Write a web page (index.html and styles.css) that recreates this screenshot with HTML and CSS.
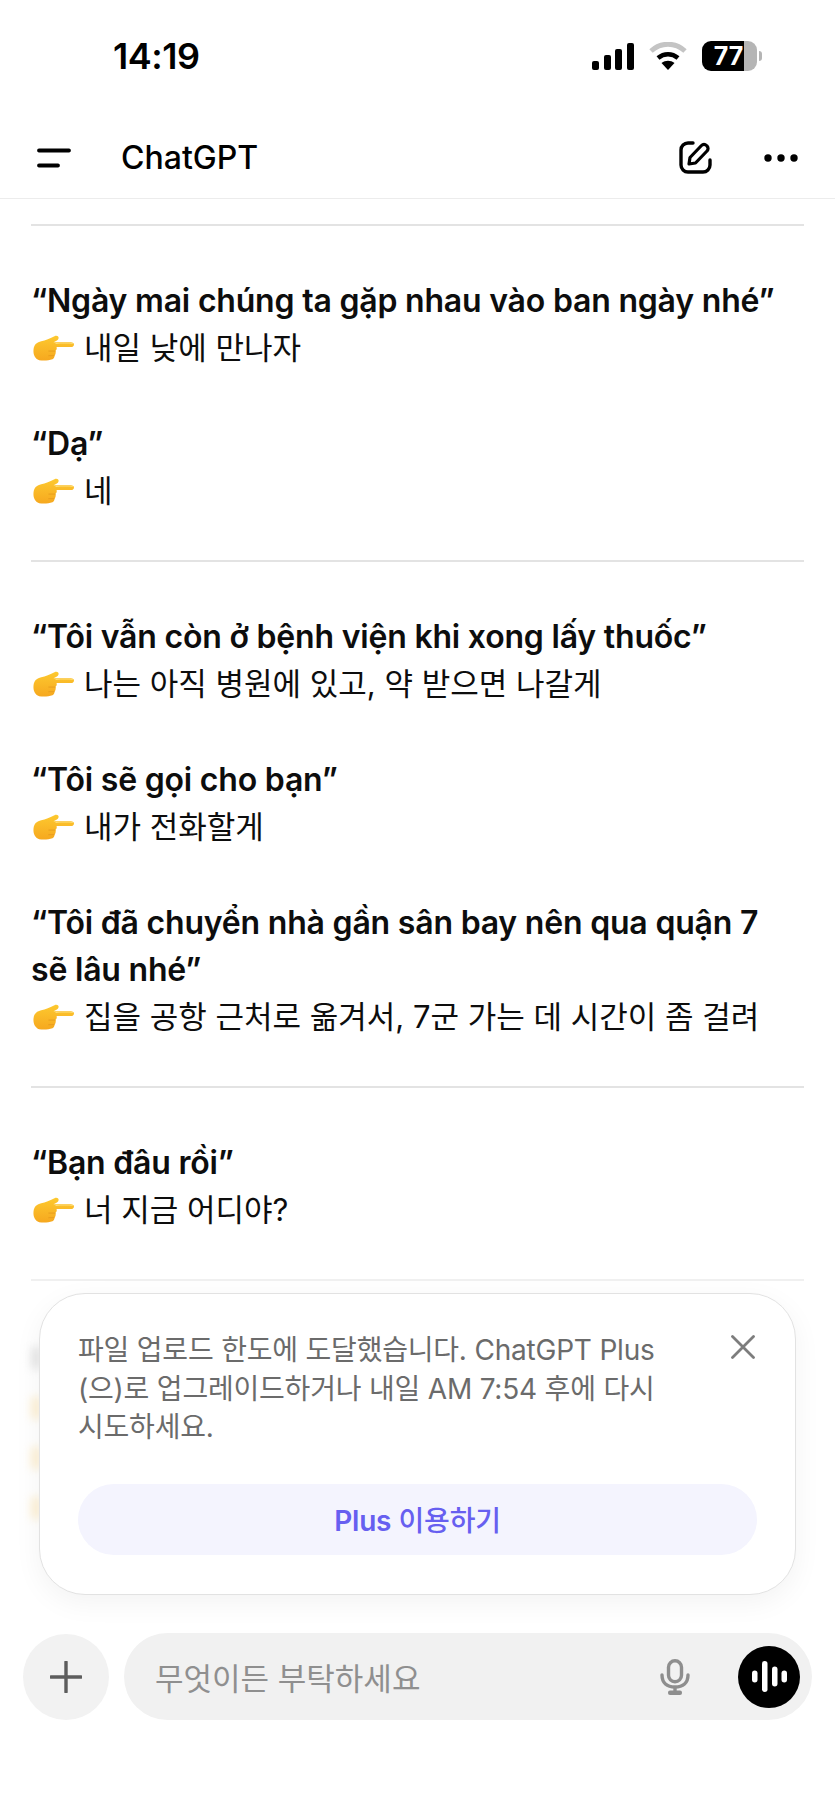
FILE: index.html
```html
<!DOCTYPE html>
<html lang="ko">
<head>
<meta charset="utf-8">
<title>ChatGPT</title>
<link rel="stylesheet" href="styles.css">
</head>
<body>
<svg class="defs" width="0" height="0" aria-hidden="true">
  <defs>
    <linearGradient id="handfill" x1="0" y1="0" x2="0" y2="1">
      <stop offset="0" stop-color="#fdc92f"/>
      <stop offset="1" stop-color="#f6a81f"/>
    </linearGradient>
  </defs>
  <symbol id="hand" viewBox="0 0 40 25">
    <path d="M.5 14C1 9 4 7 8 6c4-1 9-3 13-5 2-1 4 0 4 1.500S24 5 22 6l-2 1h17c2 0 3 1 3 2 0 1.500-1 2.500-3 2.500H23c.5 1.500 0 3-1 3.500.5 2 0 4-1 5 0 2-1 3-2 3.500-4 1.500-9 1.500-13 1-4-1.500-6-5.500-5.500-10.500z" fill="url(#handfill)"/>
    <path d="M22 7.500h15.500c.8 0 1.500.4 1.800 1-5-.5-12-.4-17.300 0z" fill="#fee07a"/>
    <path d="M15 15.500h7M15 20h6" stroke="#e3961a" stroke-width=".7" fill="none"/>
  </symbol>
</svg>
<div class="phone">
  <div class="status">
    <span class="time">14:19</span>
    <div class="status-icons">
      <svg class="signal" viewBox="0 0 42 27"><rect x="0" y="18" width="7" height="9" rx="2"/><rect x="12" y="12" width="7" height="15" rx="2"/><rect x="23" y="6" width="7" height="21" rx="2"/><rect x="35" y="0" width="7" height="27" rx="2"/></svg>
      <svg class="wifi" viewBox="0 0 38 28"><path d="M2 9C12 0 26 0 36 9" stroke="#c4c4c4" stroke-width="5" fill="none"/><path d="M9 16c6-5 14-5 20 0" stroke="#000" stroke-width="4.500" fill="none"/><path d="M19 28l-6.500-7c4-3 9-3 13 0z"/></svg>
      <div class="battery"><span class="battery-level">77</span><i class="battery-cap"></i></div>
    </div>
  </div>
  <header class="topbar">
    <svg class="menu" viewBox="0 0 34 20"><path d="M2 2.500h30M2 17.500h19" stroke="#000" stroke-width="3.800" stroke-linecap="round"/></svg>
    <span class="title">ChatGPT</span>
    <svg class="edit" viewBox="0 0 33 33"><path d="M14 2H9a7 7 0 0 0-7 7v15a7 7 0 0 0 7 7h15a7 7 0 0 0 7-7v-5" fill="none" stroke="#000" stroke-width="3.400" stroke-linecap="round"/><path d="M10 23l1-6.500L22.500 4.500a3.500 3.500 0 0 1 5 0l.5.500a3.500 3.500 0 0 1 0 5L16.500 22z" fill="#fff" stroke="#000" stroke-width="3.200" stroke-linejoin="round"/></svg>
    <svg class="more" viewBox="0 0 34 8"><circle cx="4" cy="4" r="3.700"/><circle cx="17" cy="4" r="3.700"/><circle cx="30" cy="4" r="3.700"/></svg>
  </header>
  <main class="chat">
    <hr class="rule first">
    <section class="group">
      <div class="entry"><p class="vi">“Ngày mai chúng ta gặp nhau vào ban ngày nhé”</p><p class="ko"><svg class="hand"><use href="#hand"/></svg>내일 낮에 만나자</p></div>
      <div class="entry"><p class="vi">“Dạ”</p><p class="ko"><svg class="hand"><use href="#hand"/></svg>네</p></div>
    </section>
    <hr class="rule">
    <section class="group">
      <div class="entry"><p class="vi">“Tôi vẫn còn ở bệnh viện khi xong lấy thuốc”</p><p class="ko"><svg class="hand"><use href="#hand"/></svg>나는 아직 병원에 있고, 약 받으면 나갈게</p></div>
      <div class="entry"><p class="vi">“Tôi sẽ gọi cho bạn”</p><p class="ko"><svg class="hand"><use href="#hand"/></svg>내가 전화할게</p></div>
      <div class="entry"><p class="vi">“Tôi đã chuyển nhà gần sân bay nên qua quận 7<br>sẽ lâu nhé”</p><p class="ko"><svg class="hand"><use href="#hand"/></svg>집을 공항 근처로 옮겨서, 7군 가는 데 시간이 좀 걸려</p></div>
    </section>
    <hr class="rule">
    <section class="group">
      <div class="entry"><p class="vi">“Bạn đâu rồi”</p><p class="ko"><svg class="hand"><use href="#hand"/></svg>너 지금 어디야?</p></div>
    </section>
    <hr class="rule faint">
  </main>
  <div class="ghosts" aria-hidden="true"><i class="ghost grey"></i><i class="ghost"></i><i class="ghost"></i><i class="ghost"></i></div>
  <aside class="notice">
    <div class="notice-top">
      <p class="notice-text">파일 업로드 한도에 도달했습니다. ChatGPT Plus (으)로 업그레이드하거나 내일 AM 7:54 후에 다시 시도하세요.</p>
      <svg class="close" viewBox="0 0 24 24"><path d="M1.500 1.500l21 21M22.500 1.500l-21 21" stroke="#7d7d7d" stroke-width="2.800" stroke-linecap="round"/></svg>
    </div>
    <button class="upgrade"><span class="upgrade-plan">Plus</span> 이용하기</button>
  </aside>
  <footer class="composer">
    <div class="plus"><svg viewBox="0 0 32 32"><path d="M16 1v30M1 16h30" stroke="#5d5d5d" stroke-width="3.400" stroke-linecap="round"/></svg></div>
    <div class="field">
      <span class="placeholder">무엇이든 부탁하세요</span>
      <svg class="mic" viewBox="0 0 30 36"><rect x="8.500" y="1.800" width="13" height="21" rx="6.500" fill="none" stroke="#8e8e8e" stroke-width="3.400"/><path d="M2 16c0 8 5 12 13 12s13-4 13-12" fill="none" stroke="#8e8e8e" stroke-width="3.400" stroke-linecap="round"/><path d="M15 28v5" stroke="#8e8e8e" stroke-width="3.400"/><rect x="8" y="31.500" width="14" height="4.500" rx="2" fill="#8e8e8e"/></svg>
      <div class="voice"><svg viewBox="0 0 35 31"><rect x="0" y="9.500" width="5.500" height="12" rx="2.750"/><rect x="10" y="0" width="5.500" height="31" rx="2.750"/><rect x="20" y="5.500" width="5.500" height="20" rx="2.750"/><rect x="29.500" y="9.500" width="5.500" height="12" rx="2.750"/></svg></div>
    </div>
  </footer>
</div>
</body>
</html>
```

FILE: styles.css
```css
* { box-sizing: border-box; }
html, body { margin: 0; padding: 0; background: #fff; }
body { font-family: Inter, "Noto Sans CJK KR", sans-serif; color: #0d0d0d; }
.defs { position: absolute; }
.phone { position: relative; width: 835px; height: 1810px; overflow: hidden; background: #fff; }

.status { display: flex; align-items: center; justify-content: space-between; height: 54px; margin-top: 29px; padding: 0 78px 0 113px; }
.time { font-size: 36px; font-weight: 600; letter-spacing: -.5px; color: #000; }
.status-icons { display: flex; align-items: center; gap: 15px; }
.signal { width: 42px; height: 27px; fill: #000; }
.wifi { width: 38px; height: 28px; fill: #000; }
.battery { position: relative; display: flex; align-items: center; justify-content: center; width: 55px; height: 30px; border-radius: 9px; background: linear-gradient(90deg, #000 76%, #b5b5b5 76%); color: #fff; font-size: 25px; font-weight: 700; }
.battery-level { margin-left: -2px; }
.battery-cap { position: absolute; right: -5px; top: 10px; width: 3px; height: 10px; border-radius: 0 3px 3px 0; background: #b5b5b5; }

.topbar { display: flex; align-items: center; height: 116px; padding: 34px 37px 0 37px; border-bottom: 1px solid #ececec; }
.menu { width: 34px; height: 20px; }
.title { flex: 1; margin-left: 50px; font-size: 32px; font-weight: 500; letter-spacing: 0; color: #000; }
.edit { width: 33px; height: 33px; margin-right: 52px; }
.more { width: 34px; height: 8px; fill: #000; }

.chat { padding: 0 31px; }
.rule { height: 2px; margin: 0; border: 0; background: #e3e3e3; }
.rule.first { margin-top: 25px; }
.rule.faint { background: #f0f0f0; }
.group { display: flex; flex-direction: column; gap: 49px; padding: 51px 0 46px; }
.vi { margin: 0; font-size: 32px; line-height: 47px; font-weight: 600; letter-spacing: -.2px; color: #0d0d0d; }
.ko { display: flex; align-items: center; margin: 0; font-size: 31px; line-height: 47px; font-weight: 400; color: #0d0d0d; }
.hand { flex: none; width: 41px; height: 26px; margin: 0 10px 0 2px; }

.ghosts { position: absolute; left: 31px; top: 1346px; display: flex; flex-direction: column; gap: 26px; }
.ghost { display: block; width: 10px; height: 24px; border-radius: 5px; background: #fdf0d4; filter: blur(4px); }
.ghost.grey { background: #e6e6e6; }

.notice { position: absolute; left: 39px; top: 1293px; width: 757px; height: 302px; padding: 37px 38px 0; background: #fff; border: 1px solid #e2e2e2; border-radius: 46px; box-shadow: 0 8px 28px rgba(0,0,0,.05); }
.notice-top { display: flex; justify-content: space-between; align-items: flex-start; }
.notice-text { width: 590px; margin: 0; font-size: 28px; line-height: 38.500px; color: #6b6b6b; letter-spacing: -.2px; word-break: keep-all; }
.close { flex: none; width: 24px; height: 24px; margin-top: 4px; margin-right: 2px; }
.upgrade { display: block; width: 679px; height: 71px; margin-top: 37px; border: 0; border-radius: 36px; background: #f4f4fe; color: #675ff0; font: 500 28px Inter, "Noto Sans CJK KR", sans-serif; letter-spacing: -.2px; }
.upgrade-plan { font-weight: 600; }

.composer { position: absolute; left: 23px; top: 1633px; width: 789px; display: flex; align-items: center; gap: 15px; }
.plus { flex: none; display: flex; align-items: center; justify-content: center; width: 86px; height: 86px; border-radius: 50%; background: #f2f2f2; }
.plus svg { width: 32px; height: 32px; }
.field { flex: 1; display: flex; align-items: center; height: 87px; padding: 0 12px 0 31px; border-radius: 44px; background: #f1f1f1; }
.placeholder { flex: 1; font-size: 31px; color: #8f8f8f; }
.mic { width: 30px; height: 36px; margin-right: 48px; }
.voice { display: flex; align-items: center; justify-content: center; width: 62px; height: 62px; border-radius: 50%; background: #000; }
.voice svg { width: 35px; height: 31px; fill: #fff; }
```
